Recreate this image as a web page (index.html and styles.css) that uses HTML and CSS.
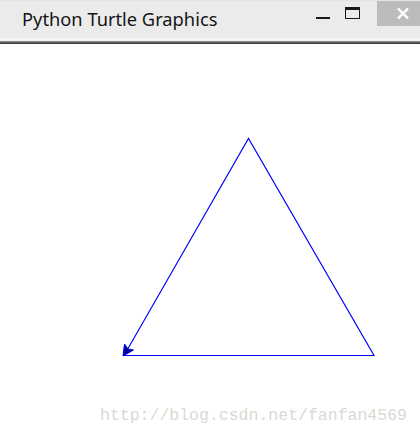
FILE: index.html
```html
<!DOCTYPE html>
<html>
<head>
<meta charset="utf-8">
<link rel="stylesheet" href="styles.css">
</head>
<body>
<div class="window">
  <div class="titlebar">
    <div class="title">Python Turtle Graphics</div>
    <div class="controls">
      <div class="btn-min"><span class="min-bar"></span></div>
      <div class="btn-max"><span class="max-box"></span></div>
      <div class="btn-close">
        <svg width="12" height="11" viewBox="0 0 12 11"><path d="M1 0.5 L11 10.5 M11 0.5 L1 10.5" stroke="#fff" stroke-width="2.4" fill="none"/></svg>
      </div>
    </div>
  </div>
  <div class="sep-light"></div>
  <div class="sep-dark"></div>
  <div class="canvas">
    <svg class="drawing" width="420" height="394" viewBox="0 0 420 394">
      <polyline points="124,311.5 374,311.5 248.5,94.5 124,311.5" fill="none" stroke="#0000ff" stroke-width="1.15"/>
      <polygon points="123,312 133.5,306 128,305 124.5,300" fill="#00008c" stroke="#0000ff" stroke-width="1" stroke-linejoin="miter"/>
    </svg>
    <div class="watermark">http://blog.csdn.net/fanfan4569</div>
  </div>
</div>
</body>
</html>
```
FILE: styles.css
```css
html, body {
  margin: 0;
  padding: 0;
  background: #ffffff;
}
.window {
  width: 420px;
  height: 438px;
  display: flex;
  flex-direction: column;
  overflow: hidden;
}
.titlebar {
  height: 38px;
  background: #ebebeb;
  display: flex;
  align-items: flex-start;
  border-top: 1px solid #e3e3e3;
  box-sizing: border-box;
}
.title {
  font-family: "Noto Sans", "Open Sans", sans-serif;
  font-size: 18.3px;
  color: #151515;
  padding-left: 22px;
  line-height: 36px;
  flex: 1;
}
.controls {
  display: flex;
  align-items: flex-start;
}
.btn-min {
  width: 30px;
  height: 25px;
  display: flex;
  justify-content: center;
  padding-left: 2px;
  box-sizing: border-box;
}
.min-bar {
  width: 14px;
  height: 2px;
  background: #1a1a1a;
  margin-top: 16px;
}
.btn-max {
  width: 30px;
  height: 25px;
  display: flex;
  justify-content: center;
  margin-right: 10px;
}
.max-box {
  width: 15px;
  height: 12px;
  box-sizing: border-box;
  border: 1.5px solid #1a1a1a;
  border-top-width: 3px;
  margin-top: 6px;
}
.btn-close {
  width: 43px;
  height: 25px;
  background: #bcbcbc;
  display: flex;
  align-items: center;
  justify-content: center;
  padding-left: 8px;
  box-sizing: border-box;
}
.btn-close svg {
  display: block;
}
.sep-light {
  height: 3px;
  background: #f3f3f3;
}
.sep-dark {
  height: 3px;
  background: linear-gradient(#9a9a9a, #2a2a2a);
}
.canvas {
  position: relative;
  flex: 1;
  background: #ffffff;
}
.drawing {
  display: block;
}
.watermark {
  position: absolute;
  left: 100px;
  top: 362px;
  font-family: "Liberation Mono", monospace;
  font-size: 16.5px;
  color: #dcd8d3;
  white-space: nowrap;
}
```
